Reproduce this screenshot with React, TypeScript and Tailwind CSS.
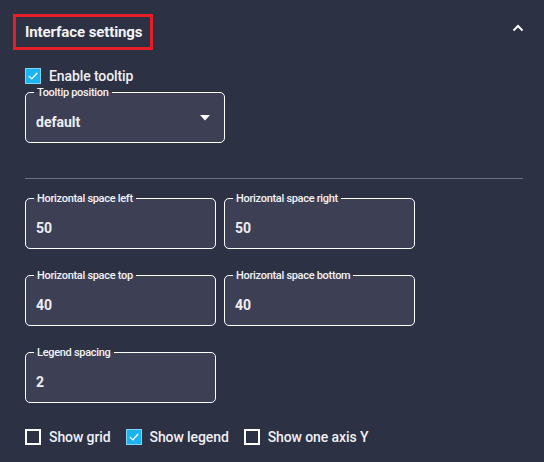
import React from "react";

const font = { fontFamily: "Roboto, 'Noto Sans', Arial, sans-serif" };

function Check({ checked, label }: { checked: boolean; label: string }) {
  return (
    <label className="flex items-center gap-[8px] cursor-pointer select-none">
      <span
        className={
          checked
            ? "flex h-[16px] w-[16px] items-center justify-center border border-[#7fd6f7] bg-[#1bb3f0]"
            : "h-[16px] w-[16px] border-2 border-white bg-transparent"
        }
      >
        {checked && (
          <svg width="12" height="12" viewBox="0 0 12 12" fill="none">
            <path d="M2.2 6.4 L4.8 8.9 L9.9 3.2" stroke="white" strokeWidth="1.3" strokeLinecap="round" strokeLinejoin="round" />
          </svg>
        )}
      </span>
      <span className="text-[14px] font-medium leading-[16px] tracking-[-0.1px] text-[#f0f0f4]">{label}</span>
    </label>
  );
}

function Field({ label, value, width, select }: { label: string; value: string; width: string; select?: boolean }) {
  return (
    <fieldset className={`${width} m-0 h-[57px] rounded-[5px] border border-white bg-[#3d3f55] pl-[8px] pr-[10px] pt-0 pb-0`}>
      <legend className="px-[3px] text-[11px] font-medium leading-[13px] tracking-[-0.3px] text-[#f2f2f5]">{label}</legend>
      <div className="mt-[13px] flex items-center justify-between pl-[2px]">
        <span className="text-[14px] font-bold leading-[20px] text-[#eeeef2]">{value}</span>
        {select && (
          <svg width="10" height="6" viewBox="0 0 10 6" className="mr-[4px] -mt-[8px]">
            <path d="M0 0 L10 0 L5 5.5 Z" fill="white" />
          </svg>
        )}
      </div>
    </fieldset>
  );
}

export default function App() {
  return (
    <div className="h-[462px] w-[544px] overflow-hidden bg-[#2d3144]" style={font}>
      <div className="flex items-center justify-between pl-[13px] pr-[20px] pt-[14px]">
        <div className="flex h-[36px] items-center border-[3px] border-[#e61e28] pl-[9px] pr-[8px]">
          <span className="text-[15px] font-bold tracking-[-0.1px] text-[#f3f3f6]">Interface settings</span>
        </div>
        <svg width="12" height="8" viewBox="0 0 12 8" fill="none" className="-mt-[8px]">
          <path d="M1.5 6.5 L6 2 L10.5 6.5" stroke="white" strokeWidth="2" />
        </svg>
      </div>

      <div className="px-[25px]">
        <div className="mt-[18px]">
          <Check checked label="Enable tooltip" />
        </div>
        <div className="mt-[2px]">
          <Field label="Tooltip position" value="default" width="w-[200px]" select />
        </div>

        <div className="mt-[35px] h-px w-[498px] bg-[#6c6f82]" />

        <div className="mt-[13px] flex flex-col gap-[20px]">
          <div className="flex gap-[8px]">
            <Field label="Horizontal space left" value="50" width="w-[191px]" />
            <Field label="Horizontal space right" value="50" width="w-[191px]" />
          </div>
          <div className="flex gap-[8px]">
            <Field label="Horizontal space top" value="40" width="w-[191px]" />
            <Field label="Horizontal space bottom" value="40" width="w-[191px]" />
          </div>
          <div className="flex gap-[8px]">
            <Field label="Legend spacing" value="2" width="w-[191px]" />
          </div>
        </div>

        <div className="mt-[26px] flex items-center gap-[15px]">
          <Check checked={false} label="Show grid" />
          <Check checked label="Show legend" />
          <Check checked={false} label="Show one axis Y" />
        </div>
      </div>
    </div>
  );
}
